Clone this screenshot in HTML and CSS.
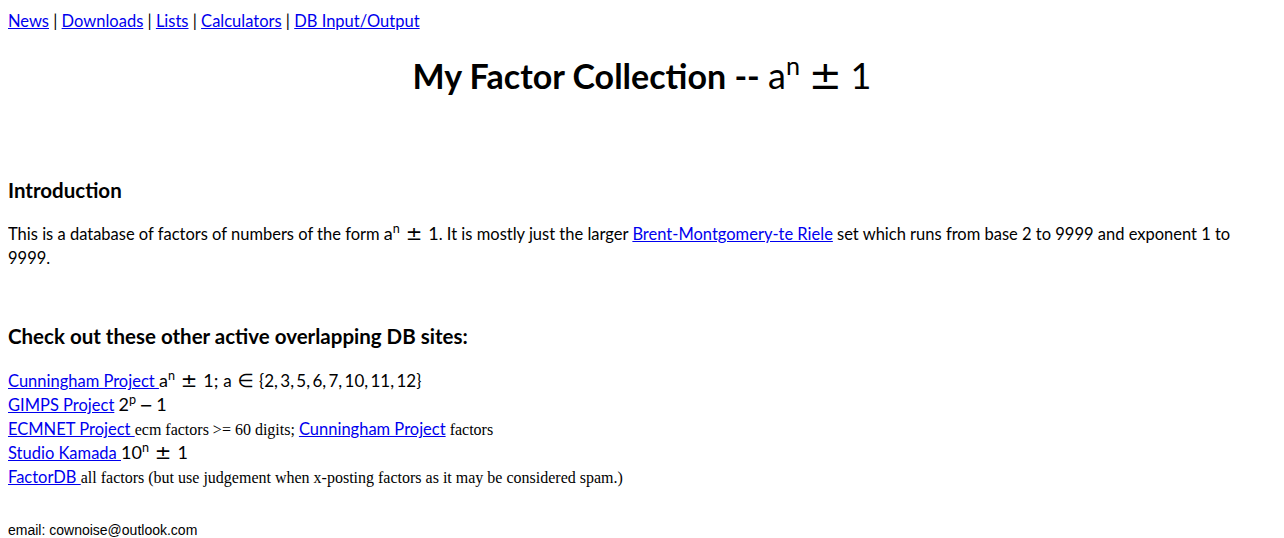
FILE: index.html
```html
<!DOCTYPE html>
<html lang="en">
<head>
  <meta charset="UTF-8">
  <title>My Factor Collection</title>
  <link rel="stylesheet" href="styles.css">
</head>
<body>
  <div class="nav">
    <a href="#">News</a> | <a href="#">Downloads</a> | <a href="#">Lists</a> | <a href="#">Calculators</a> | <a href="#">DB Input/Output</a>
  </div>

  <h1>My Factor Collection -- <span class="math">a<sup>n</sup><span class="op">±</span>1</span></h1>

  <h3 class="intro-head">Introduction</h3>
  <p class="intro">This is a database of factors of numbers of the form <span class="math">a<sup>n</sup><span class="op">±</span>1</span>. It is mostly just the larger <a href="#">Brent-Montgomery-te Riele</a> set which runs from base 2 to 9999 and exponent 1 to 9999.</p>

  <h3 class="sites-head">Check out these other active overlapping DB sites:</h3>
  <div class="sites">
    <div><a href="#">Cunningham Project </a><span class="math">a<sup>n</sup><span class="op">±</span>1; <span class="set">a<span class="op">∈</span>{2, 3, 5, 6, 7, 10, 11, 12}</span></span></div>
    <div><a href="#">GIMPS Project</a> <span class="math">2<sup>p</sup><span class="op minus">−</span>1</span></div>
    <div><a href="#">ECMNET Project </a><span class="serif">ecm factors &gt;= 60 digits; </span><a href="#">Cunningham Project</a><span class="serif"> factors</span></div>
    <div><a href="#">Studio Kamada </a><span class="math">10<sup>n</sup><span class="op">±</span>1</span></div>
    <div><a href="#">FactorDB </a><span class="serif">all factors (but use judgement when x-posting factors as it may be considered spam.)</span></div>
  </div>

  <p class="email">email: cownoise@outlook.com</p>
</body>
</html>
```

FILE: styles.css
```css
body {
  margin: 8px;
  font-family: Lato, "Noto Sans", sans-serif;
  font-size: 16.5px;
  line-height: 24px;
  color: #000;
}
a {
  color: #0000ee;
}
.nav {
  line-height: 26px;
}
h1 {
  text-align: center;
  font-size: 34px;
  line-height: 40px;
  margin: 22px 0 0;
}
h1 .math {
  font-size: 36px;
}
h1 .op {
  margin: 0 0.22em;
}
h3 {
  font-size: 20.5px;
  line-height: 24px;
  margin: 0;
}
.intro-head {
  margin-top: 82px;
}
.intro {
  margin: 20px 0 0;
}
.sites-head {
  margin-top: 54px;
}
.sites {
  margin-top: 21px;
}
.sites div {
  height: 24px;
}
.math {
  font-weight: normal;
  font-size: 18px;
  line-height: 0;
}
.math sup {
  font-size: 0.7em;
  line-height: 0;
  vertical-align: 0.55em;
}
.op {
  display: inline-block;
  margin: 0 0.3em;
  line-height: 0;
  font-family: "DejaVu Sans", sans-serif;
  font-size: 1.1em;
}
.op.minus {
  margin: 0 0.2em;
  font-size: 0.9em;
}
.set {
  font-size: 17px;
  word-spacing: -2px;
}
.serif {
  font-family: "Liberation Serif", serif;
  font-size: 16px;
  line-height: 16px;
}
.email {
  font-family: "Liberation Sans", Arial, sans-serif;
  font-size: 14px;
  line-height: 16px;
  margin: 33px 0 0;
}
```
